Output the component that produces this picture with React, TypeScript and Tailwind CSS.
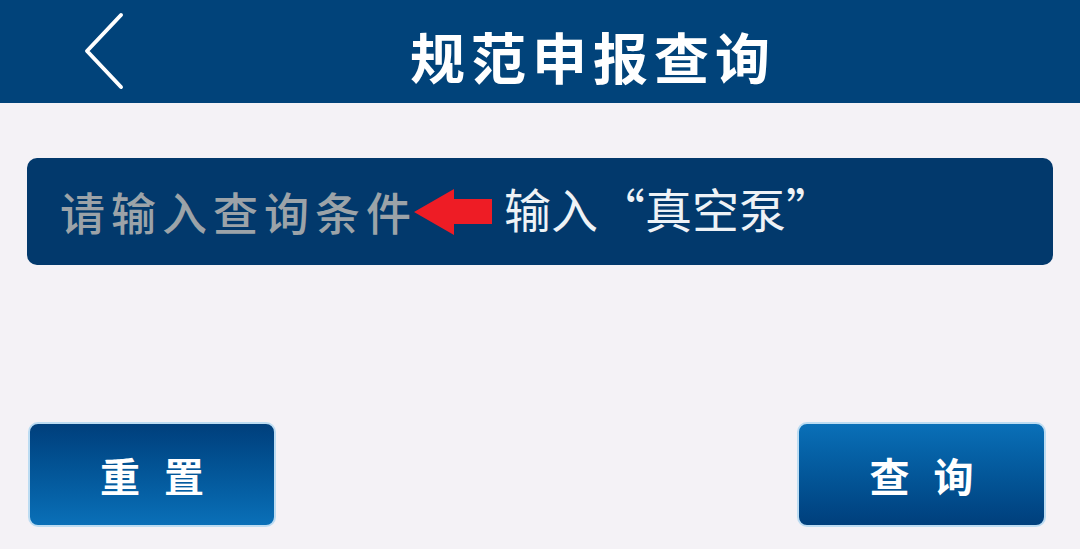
const cjk = { fontFamily: '"Noto Sans CJK SC", "Noto Sans", sans-serif' }

function BackIcon() {
  return (
    <svg width="44" height="80" viewBox="0 0 44 80" fill="none">
      <path d="M38 3 L4 39 L38 75" stroke="#ffffff" strokeWidth="4" strokeLinecap="round" strokeLinejoin="round" />
    </svg>
  )
}

function RedArrow() {
  return (
    <svg width="80" height="50" viewBox="0 0 80 50" className="shrink-0 -ml-[3px]">
      <polygon points="0,25 40,2 40,12 78,12 78,37 40,37 40,48" fill="#ee1c25" />
    </svg>
  )
}

export default function App() {
  return (
    <div className="w-[1080px] h-[549px] bg-[#f4f2f6] overflow-hidden" style={cjk}>
      {/* Header */}
      <header className="h-[103px] bg-[#01437a] flex items-center pl-[83px]">
        <BackIcon />
        <h1 className="ml-[283px] mt-[8px] text-[55px] font-bold text-white tracking-[6px] leading-none">规范申报查询</h1>
      </header>

      {/* Search input */}
      <div className="mx-[27px] mt-[55px] h-[107px] rounded-[10px] bg-[#02396c] flex items-center pl-[33px]">
        <span className="text-[45px] text-[#9ca3a8] font-medium tracking-[6px] leading-none">请输入查询条件</span>
        <RedArrow />
        <span className="ml-[10px] mb-[8px] text-[47px] text-[#eef2f6] leading-none">输入“真空泵”</span>
      </div>

      {/* Buttons */}
      <div className="mt-[157px] flex justify-between pl-[28px] pr-[34px]">
        <button className="w-[248px] h-[105px] rounded-[10px] border-2 border-[#bcdcf2] bg-gradient-to-b from-[#003f7c] to-[#0a70b8] text-white text-[40px] font-bold tracking-[24px] pl-[24px] leading-none">
          重置
        </button>
        <button className="w-[249px] h-[105px] rounded-[10px] border-2 border-[#bcdcf2] bg-gradient-to-b from-[#0a70b8] to-[#003f7c] text-white text-[40px] font-bold tracking-[24px] pl-[24px] leading-none">
          查询
        </button>
      </div>
    </div>
  )
}
